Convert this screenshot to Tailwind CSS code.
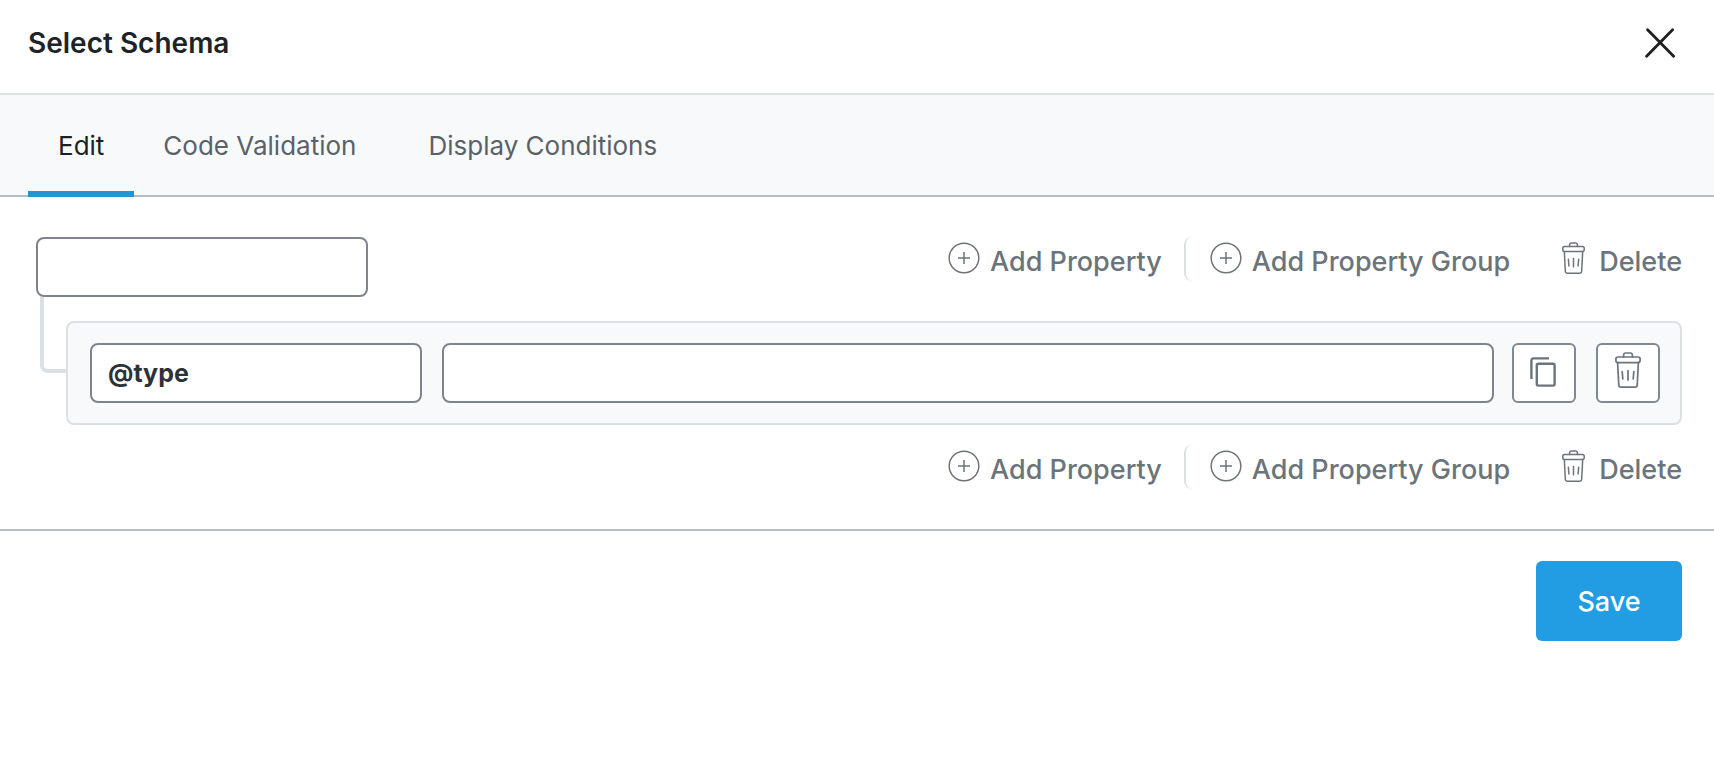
<!DOCTYPE html>
<html lang="en">
<head>
<meta charset="utf-8">
<meta name="viewport" content="width=device-width, initial-scale=1">
<title>Select Schema</title>
<script src="https://cdn.jsdelivr.net/npm/@tailwindcss/browser@4"></script>
</head>
<body class="bg-white font-['Inter',sans-serif] text-[#1d2327]">
<svg class="hidden" aria-hidden="true">
  <symbol id="plus" viewBox="0 0 32 32" fill="none" stroke="currentColor">
    <circle cx="16" cy="16" r="14.8" stroke-width="1.5"/>
    <path d="M16 10v12M10 16h12" stroke-width="1.5"/>
  </symbol>
  <symbol id="trash" viewBox="0 0 26 36" fill="none" stroke="currentColor" stroke-width="1.7" stroke-linecap="round" stroke-linejoin="round">
    <rect x="0.9" y="5" width="24.2" height="5.6" rx="2"/>
    <path d="M8.6 5V3a2 2 0 0 1 2-2h4.8a2 2 0 0 1 2 2v2M2.6 10.6l1.2 22.6a2 2 0 0 0 2 1.9h14.4a2 2 0 0 0 2-1.9l1.2-22.6M13 18.5v9.5M7.2 19.5l.6 7.5M18.8 19.5l-.6 7.5"/>
  </symbol>
</svg>

<header class="flex h-[95px] items-start justify-between border-b-2 border-[#dcdfe3] pt-6 pr-9 pl-7">
  <h1 class="text-[28px] leading-[38px] font-semibold">Select Schema</h1>
  <button type="button" aria-label="Close" class="mt-1">
    <svg class="h-8 w-9" viewBox="0 0 36 32" fill="none" stroke="#1d1f20" stroke-width="2.8" stroke-linecap="round"><path d="M5.6 1.8l26 26.4M30.6 1.8l-26 26.4"/></svg>
  </button>
</header>

<nav role="tablist" class="flex h-[102px] border-b-2 border-[#b4bfc8] bg-[#f8f9fb] pl-7 text-[26px] text-[#5a6167]">
  <button type="button" role="tab" aria-selected="true" class="-mb-0.5 border-b-6 border-[#2196d0] px-[30px] pt-1 text-[#1d1f20]">Edit</button>
  <button type="button" role="tab" aria-selected="false" class="ml-[29px]">Code Validation</button>
  <button type="button" role="tab" aria-selected="false" class="ml-[72px]">Display Conditions</button>
</nav>

<main class="border-b-2 border-[#b4bfc8] pt-10 pr-8 pb-10 pl-9">
  <div class="flex items-start justify-between">
    <input type="text" aria-label="Schema name" class="h-15 w-[332px] rounded-lg border-2 border-[#7e848d] bg-white px-4 text-[25px] outline-none">
    <div class="flex h-11 text-[27px] font-medium text-[#6c747b]">
      <button type="button" class="flex items-center pt-1.5"><svg class="mr-2.5 mb-2 size-8"><use href="#plus"/></svg>Add Property</button>
      <div class="ml-[22px] flex rounded-lg border-l-2 border-[#dbe0e5] pl-6">
        <button type="button" class="flex items-center pt-1.5"><svg class="mr-2.5 mb-2 size-8"><use href="#plus"/></svg>Add Property Group</button>
      </div>
      <button type="button" class="ml-[52px] flex items-center pt-1.5"><svg class="mr-3.5 mb-2 h-8 w-[23px]"><use href="#trash"/></svg>Delete</button>
    </div>
  </div>

  <div class="flex items-start">
    <div class="ml-1 h-19 w-[26px] shrink-0 rounded-bl-lg border-b-4 border-l-4 border-[#dbe0e5]"></div>
    <div class="mt-6 flex h-26 min-w-0 grow items-center rounded-lg border-2 border-[#dbe0e5] bg-[#f8f9fb] px-5 pl-[22px]">
      <input type="text" aria-label="Property name" value="@type" class="h-15 w-[332px] shrink-0 rounded-lg border-2 border-[#7e848d] bg-white px-4 text-[25px] font-bold text-[#2c3338] outline-none">
      <input type="text" aria-label="Property value" class="ml-5 h-15 min-w-0 grow rounded-lg border-2 border-[#7e848d] bg-white px-4 text-[25px] outline-none">
      <button type="button" aria-label="Duplicate" class="ml-[18px] flex h-15 w-16 shrink-0 items-center justify-center rounded-md border-2 border-[#7e8993] bg-white text-[#6c747b]">
        <svg class="mr-0.5 mb-0.5 h-[30px] w-[26px]" viewBox="0 0 26 30" fill="none" stroke="currentColor" stroke-width="2.4"><path d="M19 1.4H3.4a2 2 0 0 0-2 2V22"/><rect x="6.8" y="6.8" width="17.8" height="21.8" rx="1.5"/></svg>
      </button>
      <button type="button" aria-label="Delete property" class="ml-5 flex h-15 w-16 shrink-0 items-center justify-center rounded-md border-2 border-[#7e8993] bg-white text-[#6c747b]">
        <svg class="mb-1.5 h-9 w-[26px]"><use href="#trash"/></svg>
      </button>
    </div>
  </div>

  <div class="mt-5 flex h-11 justify-end text-[27px] font-medium text-[#6c747b]">
    <button type="button" class="flex items-center pt-1.5"><svg class="mr-2.5 mb-2 size-8"><use href="#plus"/></svg>Add Property</button>
    <div class="ml-[22px] flex rounded-lg border-l-2 border-[#dbe0e5] pl-6">
      <button type="button" class="flex items-center pt-1.5"><svg class="mr-2.5 mb-2 size-8"><use href="#plus"/></svg>Add Property Group</button>
    </div>
    <button type="button" class="ml-[52px] flex items-center pt-1.5"><svg class="mr-3.5 mb-2 h-8 w-[23px]"><use href="#trash"/></svg>Delete</button>
  </div>
</main>

<footer class="flex justify-end pt-[30px] pr-8">
  <button type="button" class="h-20 w-[146px] rounded-md bg-[#229ce3] pt-0.5 text-[27px] font-medium text-white">Save</button>
</footer>
</body>
</html>
